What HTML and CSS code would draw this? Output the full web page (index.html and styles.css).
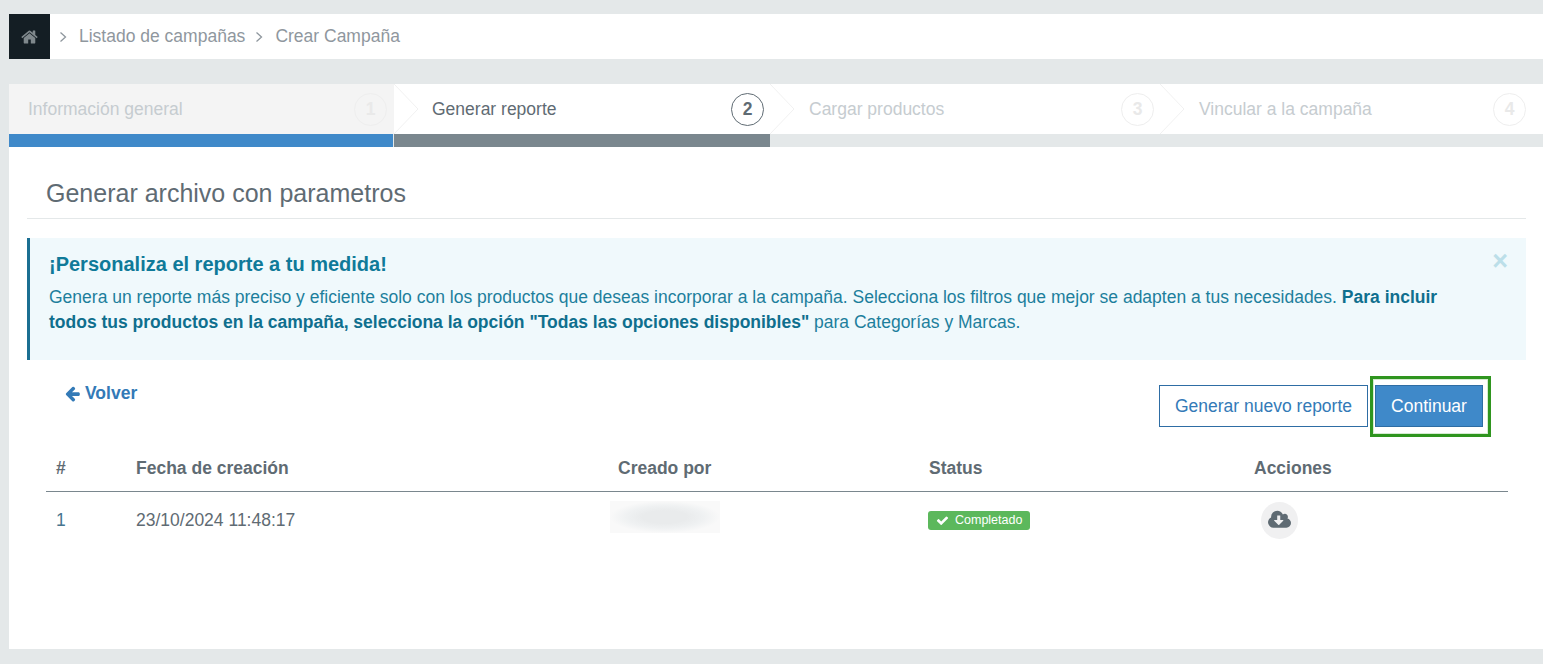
FILE: index.html
```html
<!DOCTYPE html>
<html lang="es">
<head>
<meta charset="utf-8">
<title>Crear Campaña</title>
<link rel="stylesheet" href="styles.css">
</head>
<body>
<nav class="crumbs">
  <a class="crumb-home"><svg class="home-icon" viewBox="0 0 1664 1792"><path d="M1408 992v480q0 26-19 45t-45 19h-384v-384h-256v384h-384q-26 0-45-19t-19-45v-480q0-1 .5-3t.5-3l575-474 575 474q1 2 1 6zm223-69l-62 74q-8 9-21 11h-3q-13 0-21-7l-692-577-692 577q-12 8-24 7-13-2-21-11l-62-74q-8-10-7-23.500t11-21.500l719-599q32-26 76-26t76 26l244 204v-195q0-14 9-23t23-9h192q14 0 23 9t9 23v408l219 182q10 8 11 21.500t-7 23.500z"/></svg></a>
  <svg class="crumb-sep" viewBox="0 0 8 12"><path d="M1.500 1.500 6.500 6l-5 4.500"/></svg>
  <span>Listado de campañas</span>
  <svg class="crumb-sep" viewBox="0 0 8 12"><path d="M1.500 1.500 6.500 6l-5 4.500"/></svg>
  <span>Crear Campaña</span>
</nav>

<ol class="steps">
  <li class="step step-done">
    <div class="step-head"><span class="step-name">Información general</span><span class="step-num">1</span></div>
    <div class="step-bar"></div>
  </li>
  <li class="step step-active">
    <svg class="chevron" viewBox="0 0 25 50"><path d="M0 0 24 25 0 50"/></svg>
    <div class="step-head"><span class="step-name">Generar reporte</span><span class="step-num">2</span></div>
    <div class="step-bar"></div>
  </li>
  <li class="step">
    <svg class="chevron" viewBox="0 0 25 50"><path d="M0 0 24 25 0 50"/></svg>
    <div class="step-head"><span class="step-name">Cargar productos</span><span class="step-num">3</span></div>
    <div class="step-bar"></div>
  </li>
  <li class="step">
    <svg class="chevron" viewBox="0 0 25 50"><path d="M0 0 24 25 0 50"/></svg>
    <div class="step-head"><span class="step-name">Vincular a la campaña</span><span class="step-num">4</span></div>
    <div class="step-bar"></div>
  </li>
</ol>

<main class="panel">
  <h1 class="panel-title">Generar archivo con parametros</h1>

  <section class="alert">
    <span class="alert-close">×</span>
    <h2 class="alert-title">¡Personaliza el reporte a tu medida!</h2>
    <p class="alert-text">Genera un reporte más preciso y eficiente solo con los productos que deseas incorporar a la campaña. Selecciona los filtros que mejor se adapten a tus necesidades. <b>Para incluir todos tus productos en la campaña, selecciona la opción "Todas las opciones disponibles"</b> para Categorías y Marcas.</p>
  </section>

  <div class="toolbar">
    <a class="back"><svg class="back-icon" viewBox="0 0 1792 1792"><path d="M1664 896v128q0 53-32.500 90.500t-84.500 37.500h-704l293 294q38 36 38 90t-38 90l-75 76q-37 37-90 37-52 0-91-37l-651-652q-37-37-37-90 0-52 37-91l651-650q38-38 91-38 52 0 90 38l75 74q38 38 38 91t-38 91l-293 293h704q52 0 84.500 37.500t32.500 90.500z"/></svg>Volver</a>
    <div class="actions">
      <a class="btn btn-outline">Generar nuevo reporte</a>
      <a class="btn btn-primary">Continuar</a>
    </div>
  </div>

  <table class="table">
    <colgroup><col class="c1"><col class="c2"><col class="c3"><col class="c4"><col></colgroup>
    <thead>
      <tr><th>#</th><th>Fecha de creación</th><th>Creado por</th><th>Status</th><th>Acciones</th></tr>
    </thead>
    <tbody>
      <tr>
        <td class="row-id">1</td>
        <td>23/10/2024 11:48:17</td>
        <td class="cell-blur"><div class="blurred"></div></td>
        <td class="cell-badge"><span class="badge"><svg class="badge-icon" viewBox="0 0 1792 1792"><path d="M1671 566q0 40-28 68l-724 724-136 136q-28 28-68 28t-68-28l-136-136-362-362q-28-28-28-68t28-68l136-136q28-28 68-28t68 28l294 295 656-657q28-28 68-28t68 28l136 136q28 28 28 68z"/></svg>Completado</span></td>
        <td class="cell-action"><a class="round-btn"><svg class="cloud-icon" viewBox="0 0 1920 1792"><path d="M1280 928q0-14-9-23t-23-9h-224v-352q0-13-9.500-22.500t-22.500-9.500h-192q-13 0-22.500 9.500t-9.500 22.500v352h-224q-13 0-22.500 9.500t-9.500 22.500q0 14 9 23l352 352q9 9 23 9t23-9l351-351q10-12 10-24zm640 224q0 159-112.500 271.500t-271.500 112.500h-1088q-185 0-316.500-131.500t-131.500-316.500q0-130 70-240t188-165q-2-30-2-43 0-212 150-362t362-150q156 0 285.500 87t188.500 231q71-62 166-62 106 0 181 75t75 181q0 76-41 138 130 31 213.500 135.500t83.500 238.500z"/></svg></a></td>
      </tr>
    </tbody>
  </table>
</main>
</body>
</html>
```
FILE: styles.css
```css
* { box-sizing: border-box; }
html, body { height: 100%; }
body {
  margin: 0;
  padding: 14px 0 15px 9px;
  height: 664px;
  overflow: hidden;
  background: #e4e8e9;
  font-family: "Liberation Sans", Arial, sans-serif;
  font-size: 17.5px;
  color: #5f6b73;
  display: flex;
  flex-direction: column;
}

/* breadcrumb */
.crumbs {
  height: 45px;
  flex: none;
  background: #fff;
  display: flex;
  align-items: center;
  color: #8f979e;
  font-size: 17.5px;
}
.crumb-home {
  width: 41px;
  height: 45px;
  background: #141e24;
  display: flex;
  align-items: center;
  justify-content: center;
}
.home-icon { width: 17px; height: 18px; fill: #7f888c; }
.crumb-sep {
  width: 8px;
  height: 12px;
  margin: 0 12px 0 9px;
  fill: none;
  stroke: #8f979e;
  stroke-width: 1.300;
}
.crumb-sep ~ .crumb-sep { margin-left: 10px; margin-right: 12px; }

/* wizard */
.steps {
  list-style: none;
  margin: 25px 0 0;
  padding: 0;
  flex: none;
  display: grid;
  grid-template-columns: 385px 376px 390px 1fr;
}
.step { position: relative; }
.step-head {
  height: 50px;
  background: #fff;
  display: flex;
  align-items: center;
  justify-content: space-between;
  padding: 0 6px 0 39px;
  color: #c6ccd0;
}
.step:first-child .step-head { padding-left: 19px; padding-right: 7px; }
.step:last-child .step-head { padding-right: 17px; }
.step-active .step-head { padding-left: 38px; }
.step-done .step-head { background: #f4f4f4; }
.step-num {
  width: 33px;
  height: 33px;
  border: 1px solid #eeeeee;
  border-radius: 50%;
  display: flex;
  align-items: center;
  justify-content: center;
  font-weight: 700;
  font-size: 17.5px;
  color: #e9e9e9;
}
.step-active .step-head { color: #5f6b73; }
.step-active .step-num { border-color: #5f6b73; color: #5f6b73; }
.step-bar { height: 13px; background: #e4e8e9; }
.step-done .step-bar { background: #3f89c9; margin-right: 1px; }
.step-active .step-bar { background: #7a878e; }
.chevron {
  position: absolute;
  left: 0;
  top: 0;
  width: 25px;
  height: 50px;
  fill: #fff;
  stroke: #f1f1f1;
  stroke-width: 1;
}

/* panel */
.panel {
  flex: 1;
  background: #fff;
  padding: 0 17px 0 18px;
}
.panel-title {
  margin: 0;
  height: 72px;
  padding: 32px 0 0 19px;
  border-bottom: 1px solid #e4e8e9;
  font-weight: 400;
  font-size: 25px;
  line-height: 28px;
  color: #5f6b73;
}
.alert {
  position: relative;
  margin-top: 19px;
  height: 122px;
  padding: 15px 60px 0 19px;
  background: #f0f9fc;
  border-left: 3px solid #1b6f92;
  color: #1d7f9c;
}
.alert-title {
  margin: 0 0 9px;
  font-size: 20px;
  line-height: 23px;
  font-weight: 700;
  color: #0f7a99;
}
.alert-text { margin: 0; line-height: 25px; }
.alert-text b { color: #0f6f8e; }
.alert-close {
  position: absolute;
  top: 9px;
  right: 18px;
  font-size: 27px;
  line-height: 28px;
  font-weight: 700;
  color: #bcdfe9;
}

.toolbar {
  display: flex;
  justify-content: space-between;
  align-items: flex-start;
  padding: 24px 43px 0 37px;
}
.back {
  display: flex;
  align-items: center;
  height: 18px;
  font-weight: 700;
  color: #337ab7;
}
.back-icon { width: 17px; height: 17px; fill: #337ab7; margin-right: 4px; }
.actions { display: flex; gap: 7px; margin-top: 1px; }
.btn {
  position: relative;
  display: flex;
  align-items: center;
  justify-content: center;
  height: 42px;
  border: 1px solid #2e6da4;
  font-size: 17.5px;
}
.btn-outline { width: 209px; color: #337ab7; background: #fff; }
.btn-primary { width: 108px; color: #fff; background: #3f89c9; }
.btn-primary::after {
  content: "";
  position: absolute;
  left: -6px;
  right: -9px;
  top: -10px;
  bottom: -11px;
  border: 3px solid #2f951f;
  box-shadow: inset 0 0 0 1px #d5ebd1;
}

.table {
  width: 1462px;
  margin: 20px 0 0 19px;
  border-collapse: collapse;
  table-layout: fixed;
}
.c1 { width: 80px; }
.c2 { width: 482px; }
.c3 { width: 311px; }
.c4 { width: 325px; }
.table th {
  height: 44px;
  padding: 0 10px;
  text-align: left;
  font-weight: 700;
  color: #5f6b73;
  border-bottom: 1px solid #7a878e;
}
.table td {
  height: 58px;
  padding: 0 10px;
  color: #5f6b73;
}
.table .row-id { color: #47758f; }
.table .cell-blur { padding: 0 0 0 2px; }
.blurred {
  width: 110px;
  height: 32px;
  margin-bottom: 7px;
  background: radial-gradient(ellipse closest-side, #e9ebec 40%, #eff1f2 70%, #f9f9f9 100%);
}
.table .cell-badge { padding: 0 0 0 9px; }
.badge {
  display: flex;
  align-items: center;
  width: 102px;
  height: 19px;
  padding-left: 8px;
  background: #5cb85c;
  border-radius: 3px;
  color: #fff;
  font-size: 12.5px;
}
.badge-icon { width: 13px; height: 13px; fill: #fff; margin-right: 6px; }
.table .cell-action { padding: 0 0 0 17px; }
.round-btn {
  width: 37px;
  height: 37px;
  border-radius: 50%;
  background: #f0f0f1;
  display: flex;
  align-items: center;
  justify-content: center;
}
.cloud-icon { width: 23px; height: 22px; fill: #5f6b73; }
```
